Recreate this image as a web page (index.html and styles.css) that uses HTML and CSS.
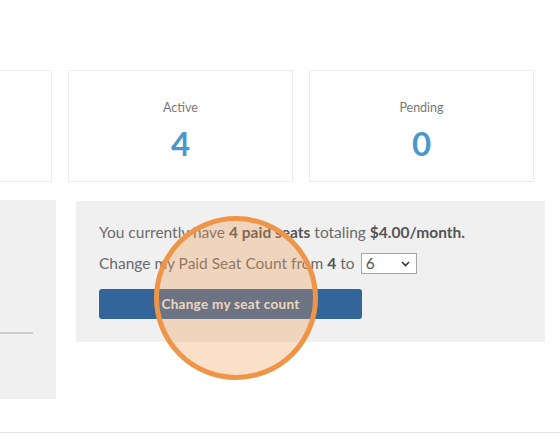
FILE: index.html
```html
<!DOCTYPE html>
<html>
<head>
<meta charset="utf-8">
<link rel="stylesheet" href="styles.css">
</head>
<body>
<div class="page">
  <div class="stats">
    <div class="card"></div>
    <div class="card">
      <div class="card-label">Active</div>
      <div class="card-value">4</div>
    </div>
    <div class="card">
      <div class="card-label">Pending</div>
      <div class="card-value">0</div>
    </div>
  </div>
  <div class="lower">
    <div class="side-box">
      <div class="side-rule"></div>
    </div>
    <div class="seat-box">
      <p class="seat-line">You currently have <b>4 paid seats</b> totaling <b>$4.00/month.</b></p>
      <div class="seat-change">
        <span>Change my Paid Seat Count from <b>4</b> to</span>
        <span class="select">
          <select class="select-input"><option>6</option></select>
          <svg class="chevron" width="9" height="6" viewBox="0 0 9 6"><path d="M1 1 L4.5 4.5 L8 1" fill="none" stroke="#333" stroke-width="1.6"/></svg>
        </span>
      </div>
      <button class="seat-button">Change my seat count</button>
    </div>
  </div>
  <div class="footer-rule"></div>
  <div class="highlight"></div>
</div>
</body>
</html>
```
FILE: styles.css
```css
html, body {
  margin: 0;
  padding: 0;
  background: #ffffff;
  overflow: hidden;
}
body {
  font-family: Lato, "Open Sans", sans-serif;
  color: #6b6b6b;
}
.page {
  position: relative;
  width: 560px;
  height: 440px;
  padding-top: 70px;
  box-sizing: border-box;
}
.stats {
  display: flex;
  gap: 16px;
  margin-left: -173px;
}
.card {
  flex: 0 0 225px;
  height: 112px;
  box-sizing: border-box;
  border: 1px solid #ebebeb;
  padding-top: 29px;
  display: flex;
  flex-direction: column;
  align-items: center;
}
.card-label {
  font-size: 12.5px;
  line-height: 16px;
  color: #777777;
}
.card-value {
  margin-top: 9px;
  font-size: 33px;
  line-height: 36px;
  font-weight: 700;
  color: #4a98cb;
}
.lower {
  display: flex;
  align-items: flex-start;
  gap: 20px;
  margin-top: 18px;
  margin-left: -144px;
}
.side-box {
  width: 200px;
  height: 199px;
  background: #f0f0f0;
  padding-top: 132px;
  padding-right: 23px;
  box-sizing: border-box;
}
.side-rule {
  height: 2px;
  background: #cfcfcf;
}
.seat-box {
  width: 469px;
  margin-top: 1px;
  background: #f0f0f0;
  padding: 21px 23px 23px;
  box-sizing: border-box;
  font-size: 15.5px;
}
.seat-box b {
  color: #555555;
  font-weight: 700;
}
.seat-line {
  margin: 0;
  line-height: 20px;
}
.seat-change {
  margin-top: 11px;
  display: flex;
  align-items: center;
  gap: 6px;
  height: 21px;
  line-height: 21px;
}
.select {
  display: flex;
  align-items: center;
  width: 56px;
  height: 21px;
  box-sizing: border-box;
  border: 1px solid #a6a6a6;
  background: #ffffff;
  padding: 0 6px 0 0;
}
.select-input {
  appearance: none;
  -webkit-appearance: none;
  border: 0;
  background: transparent;
  font-family: Lato, sans-serif;
  font-size: 15.5px;
  color: #555555;
  padding: 0 0 0 4px;
  margin: 0;
  flex: 1;
  min-width: 0;
  height: 19px;
  line-height: 19px;
  outline: none;
}
.chevron {
  display: block;
}
.seat-button {
  display: block;
  margin-top: 15px;
  width: 263px;
  height: 30px;
  border: 0;
  border-radius: 3px;
  background: #34659a;
  color: #f0f0f0;
  font-family: Lato, sans-serif;
  font-size: 13.5px;
  font-weight: 700;
  letter-spacing: 0.3px;
  padding: 0;
}
.footer-rule {
  margin-top: 33px;
  height: 1px;
  background: #e6e6e6;
}
.highlight {
  position: absolute;
  left: 154px;
  top: 216px;
  width: 164px;
  height: 164px;
  box-sizing: border-box;
  border-radius: 50%;
  border: 5px solid #ef9548;
  background: rgba(240, 150, 75, 0.3);
}
```
